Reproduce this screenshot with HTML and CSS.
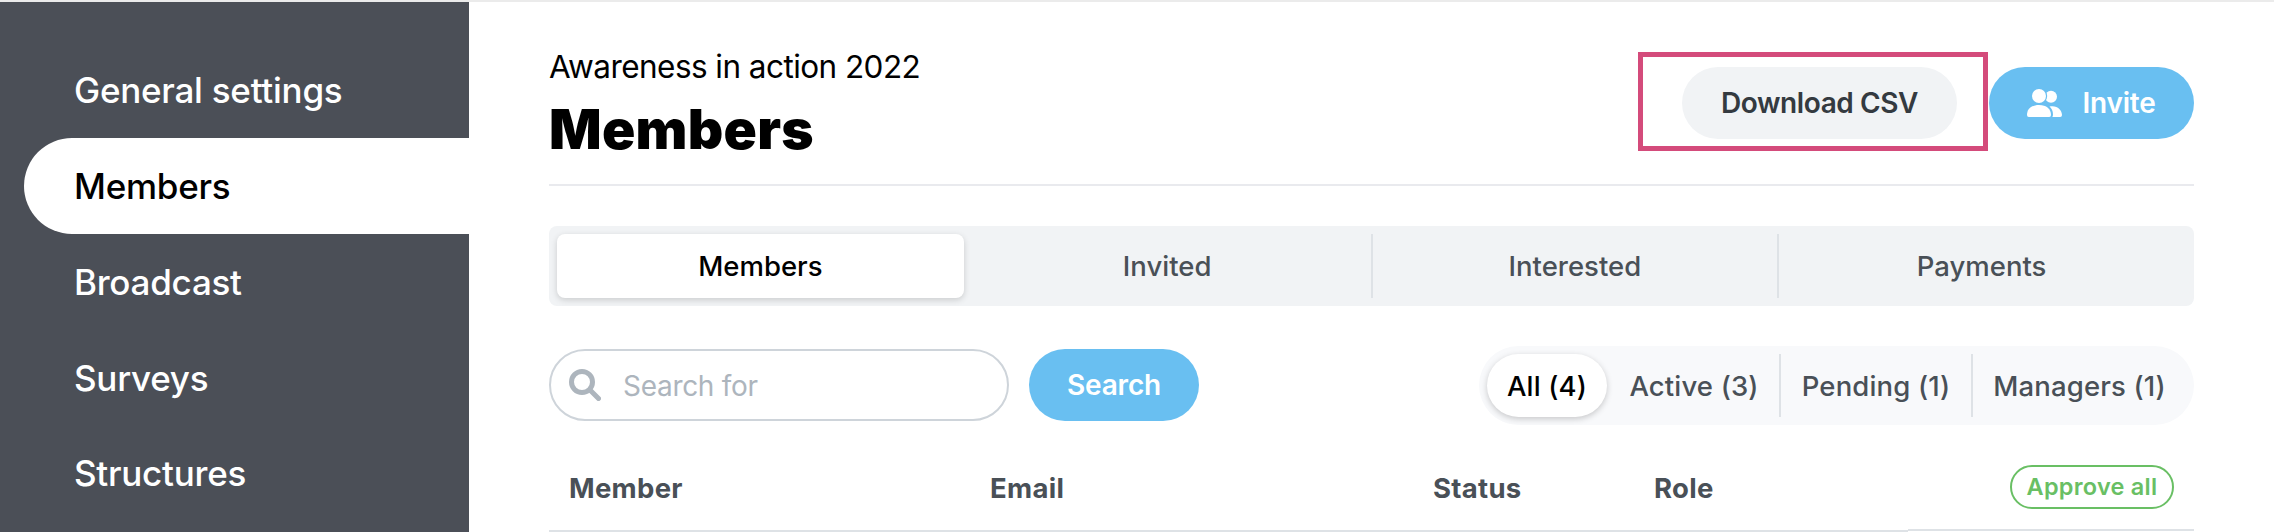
FILE: index.html
```
<!DOCTYPE html>
<html lang="en">
<head>
    <meta charset="UTF-8">
    <meta name="viewport" content="width=device-width, initial-scale=1.0">
    <title>Members</title>
    <link rel="stylesheet" href="styles.css">
</head>
<body>
    <div class="container">
        <nav class="sidebar">
            <a class="nav-item">General settings</a>
            <a class="nav-item active">Members</a>
            <a class="nav-item">Broadcast</a>
            <a class="nav-item">Surveys</a>
            <a class="nav-item">Structures</a>
        </nav>

        <main class="content">
            <header class="page-header">
                <div class="titles">
                    <p class="subtitle">Awareness in action 2022</p>
                    <h1>Members</h1>
                </div>
                <div class="actions">
                    <div class="highlight">
                        <button class="button light-button">Download CSV</button>
                    </div>
                    <button class="button invite-button">
                        <svg class="invite-icon" viewBox="0 0 35 28" fill="currentColor">
                            <circle cx="24" cy="7.800" r="6"/>
                            <circle class="front-head" cx="12" cy="7" r="8.200"/>
                            <path d="M22.500 17.600C23.500 17.300 24.500 17.200 25.500 17.200C31 17.200 35 21.500 35 26Q35 28 33.200 28H25.300Q26 27 26 25.500C26 22 24.500 19.500 22.500 17.600Z"/>
                            <circle cx="12" cy="7" r="7"/>
                            <path d="M0 26C0 20 4.500 15.900 12 15.900C19.500 15.900 24 20 24 26Q24 28 22.200 28H1.800Q0 28 0 26Z"/>
                        </svg>
                        <span>Invite</span>
                    </button>
                </div>
            </header>

            <div class="tabs">
                <a class="tab active">Members</a>
                <a class="tab">Invited</a>
                <a class="tab">Interested</a>
                <a class="tab">Payments</a>
            </div>

            <div class="toolbar">
                <div class="search">
                    <svg class="search-icon" viewBox="0 0 32 32" fill="none" stroke="currentColor">
                        <circle cx="13" cy="13" r="10.500" stroke-width="5"/>
                        <path d="M21 21L29.500 29.500" stroke-width="5" stroke-linecap="round"/>
                    </svg>
                    <input type="text" class="search-input" placeholder="Search for">
                </div>
                <button class="button search-button">Search</button>

                <div class="filters">
                    <a class="filter all active">All (4)</a>
                    <a class="filter act">Active (3)</a>
                    <a class="filter pending">Pending (1)</a>
                    <a class="filter managers">Managers (1)</a>
                </div>
            </div>

            <div class="table-head">
                <div class="th">Member</div>
                <div class="th">Email</div>
                <div class="th">Status</div>
                <div class="th">Role</div>
                <div class="th th-action">
                    <button class="approve-button">Approve all</button>
                </div>
            </div>
        </main>
    </div>
</body>
</html>
```
FILE: styles.css
```
* {
    box-sizing: border-box;
}
body {
    margin: 0;
    height: 532px;
    overflow: hidden;
    font-family: Inter, "Liberation Sans", sans-serif;
    font-size: 27.5px;
    color: #495057;
    background-color: #fff;
}
.container {
    display: flex;
    height: 532px;
    border-top: 2px solid #ebebeb;
}
.sidebar {
    width: 469px;
    padding: 40px 0 0 24px;
    background-color: #4b4f57;
    overflow: hidden;
}
.nav-item {
    display: flex;
    align-items: center;
    height: 95.7px;
    padding-left: 50px;
    font-size: 35px;
    font-weight: 500;
    letter-spacing: -0.25px;
    color: #fff;
    white-space: nowrap;
}
.nav-item.active {
    height: 96.3px;
    color: #000;
    background-color: #fff;
    border-radius: 48px 0 0 48px;
}
.content {
    width: 1645px;
    margin-left: 80px;
}
.page-header {
    display: flex;
    justify-content: space-between;
    height: 184px;
    border-bottom: 2px solid #e9eaee;
}
.subtitle {
    margin: 45px 0 0;
    font-size: 31.5px;
    line-height: 40px;
    letter-spacing: -0.55px;
    color: #000;
}
h1 {
    margin: 9px 0 0;
    font-size: 55px;
    line-height: 66px;
    font-weight: 900;
    letter-spacing: 0.3px;
    color: #000;
}
.actions {
    display: flex;
    align-items: flex-start;
    padding-top: 50px;
}
.highlight {
    display: flex;
    width: 350px;
    height: 99px;
    margin-right: 1px;
    padding: 10px 0 0 39px;
    border: 5px solid #d44b7b;
}
.button {
    display: flex;
    align-items: center;
    justify-content: center;
    height: 72px;
    padding: 0;
    border: none;
    border-radius: 36px;
    font-family: inherit;
    font-size: 28px;
    font-weight: 600;
    letter-spacing: -0.2px;
    color: #fff;
    background-color: #69bff1;
    white-space: nowrap;
    cursor: pointer;
}
.light-button {
    width: 275px;
    letter-spacing: -0.4px;
    color: #343a40;
    background-color: #f1f3f5;
}
.invite-button {
    width: 205px;
    margin-top: 15px;
    gap: 20px;
}
.invite-icon {
    width: 35px;
    height: 28px;
}
/* cuts the back figure where the front one overlaps it */
.front-head {
    fill: #69bff1;
}
.tabs {
    display: flex;
    height: 80px;
    margin-top: 40px;
    padding: 8px 10px 8px 8px;
    border-radius: 8px;
    background-color: #f1f3f5;
}
.tab {
    display: flex;
    width: 25%;
    align-items: center;
    justify-content: center;
    font-weight: 500;
}
.tab + .tab + .tab {
    border-left: 2px solid #dee2e6;
}
.tab.active {
    color: #000;
    background-color: #fff;
    border-radius: 8px;
    box-shadow: 0 2px 6px rgba(0, 0, 0, 0.16);
}
.toolbar {
    display: flex;
    align-items: flex-start;
    height: 79px;
    margin-top: 40px;
}
.search {
    display: flex;
    align-items: center;
    width: 460px;
    height: 72px;
    margin-top: 3px;
    padding-left: 18px;
    border: 2px solid #ced4da;
    border-radius: 36px;
}
.search-icon {
    width: 32px;
    height: 32px;
    color: #adb5bd;
}
.search-input {
    width: 350px;
    margin-left: 22px;
    padding: 2px 0 0;
    border: none;
    outline: none;
    font-family: inherit;
    font-size: 28px;
    letter-spacing: -0.3px;
    background: none;
}
.search-input::placeholder {
    color: #adb5bd;
}
.search-button {
    width: 170px;
    margin: 3px 0 0 20px;
    letter-spacing: -0.2px;
}
.filters {
    display: flex;
    width: 715px;
    height: 79px;
    margin-left: auto;
    padding: 8px;
    border-radius: 40px;
    background-color: #f8f9fb;
}
.filter {
    display: flex;
    align-items: center;
    justify-content: center;
    font-weight: 500;
    letter-spacing: 0.15px;
    white-space: nowrap;
}
.filter.active {
    color: #000;
    background-color: #fff;
    border-radius: 32px;
    box-shadow: 0 2px 6px rgba(0, 0, 0, 0.2);
}
.all {
    width: 120px;
}
.act {
    width: 172px;
    padding-left: 2px;
}
.pending {
    width: 192px;
    border-left: 2px solid #dee2e6;
}
.managers {
    width: 215px;
    border-left: 2px solid #dee2e6;
}
.table-head {
    display: grid;
    grid-template-columns: 421px 443px 221px 274px 286px;
    align-items: start;
    margin-top: 19px;
}
.th {
    display: flex;
    align-items: center;
    height: 88px;
    padding: 2px 0 0 20px;
    border-bottom: 2px solid #dee2e6;
    font-weight: 700;
    letter-spacing: 0.3px;
}
.th-action {
    height: 87px;
    justify-content: flex-end;
    padding: 0 20px 0 0;
}
.approve-button {
    width: 164px;
    height: 44px;
    padding: 0;
    border: 2px solid #69bf64;
    border-radius: 22px;
    font-family: inherit;
    font-size: 23.5px;
    font-weight: 600;
    letter-spacing: 0.25px;
    color: #69bf64;
    background-color: #fff;
    white-space: nowrap;
    cursor: pointer;
}
```
